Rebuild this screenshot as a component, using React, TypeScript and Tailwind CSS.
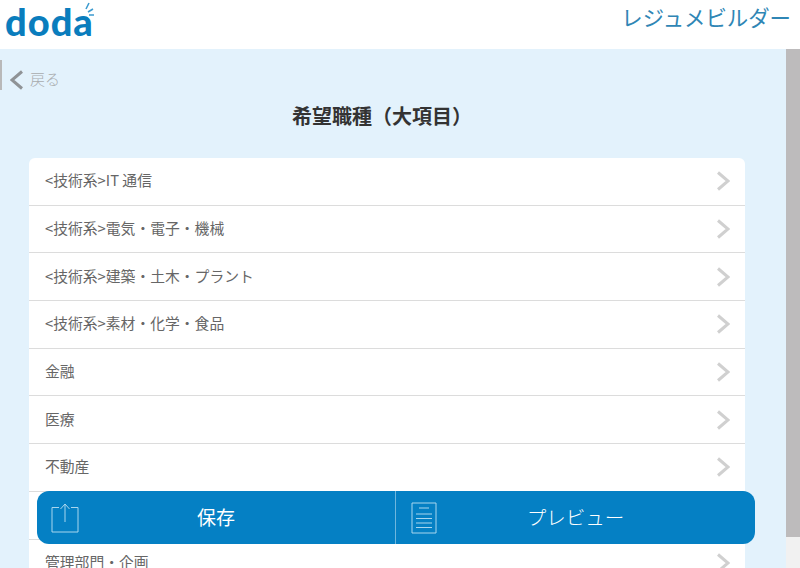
import React from 'react';

const rows = [
  '<技術系>IT 通信',
  '<技術系>電気・電子・機械',
  '<技術系>建築・土木・プラント',
  '<技術系>素材・化学・食品',
  '金融',
  '医療',
  '不動産',
  '',
  '管理部門・企画',
];

const Chevron: React.FC<{ className?: string }> = ({ className }) => (
  <svg viewBox="0 0 14 20" className={className} fill="none" stroke="currentColor" strokeWidth="3">
    <path d="M2 1.5 L12 10 L2 18.5" />
  </svg>
);

const App: React.FC = () => {
  return (
    <div className="relative h-[568px] w-[800px] overflow-hidden bg-[#e3f2fc] font-['Noto_Sans_CJK_JP','Noto_Sans',sans-serif]">
      <header className="flex h-[49px] items-start justify-between bg-white pl-[5px] pr-[9px]">
        <div className="flex items-start">
          <span className="font-['Lato',sans-serif] text-[38px] leading-[42px] font-black tracking-[1px] text-[#0a7dbd]">
            doda
          </span>
          <svg viewBox="0 0 10 16" className="mt-[2px] -ml-[9px] h-[16px] w-[10px] text-[#3d9bcf]" fill="none" stroke="currentColor" strokeWidth="1.6">
            <path d="M1 7 L4 1 M3 10 L8 7 M4 13 L9 13" />
          </svg>
        </div>
        <span className="mt-[2px] text-[21.4px] leading-[30px] text-[#2f86b5]">レジュメビルダー</span>
      </header>

      <div className="flex">
        <main className="w-[786px]">
          <div className="flex h-[41px] items-center pt-[20px]">
            <div className="-mt-[10px] h-[30px] w-[2px] bg-[#b9b9b9]" />
            <Chevron className="ml-[8px] h-[20px] w-[14px] rotate-180 text-[#8f9396]" />
            <span className="mb-[2px] ml-[6px] text-[15px] leading-none font-light text-[#a8abad]">戻る</span>
          </div>
          <h1 className="mt-[11px] pr-[22px] text-center text-[20px] leading-[30px] font-bold text-[#333]">
            希望職種（大項目）
          </h1>
          <ul className="mt-[27px] ml-[29px] w-[716px] rounded-[6px] bg-white">
            {rows.map((label, idx) => (
              <li
                key={idx}
                className="flex h-[47.7px] items-center justify-between border-b border-[#dcdcdc] pr-[15px] pl-[16px] text-[14.8px] text-[#666]"
              >
                <span className="mb-[2px]">{label}</span>
                <Chevron className="h-[20px] w-[14px] text-[#d0d0d0]" />
              </li>
            ))}
          </ul>
        </main>
        <div className="flex h-[519px] w-[14px] flex-col bg-[#f1f1f1]">
          <div className="h-[488px] bg-[#bdbbbc]" />
        </div>
      </div>

      <div className="absolute top-[491px] left-[37px] flex h-[53px] w-[718px] rounded-[12px] bg-[#0580c4] text-white">
        <button className="flex w-[359px] items-center border-r border-[#6fb6dd] pl-[14px]">
          <svg viewBox="0 0 28 30" className="h-[30px] w-[28px]" fill="none" stroke="#a9d6ee" strokeWidth="1">
            <path d="M8 4.5 H1 V29 H27 V4.5 H20" />
            <path d="M14 19 V1 M9.5 6 L14 1 L18.5 6" />
          </svg>
          <span className="mb-[1px] flex-1 text-center text-[19px]">保存</span>
          <span className="w-[42px]" />
        </button>
        <button className="flex flex-1 items-center pl-[15px]">
          <svg viewBox="0 0 26 32" className="h-[32px] w-[26px]" fill="none" stroke="#a9d6ee" strokeWidth="1">
            <path d="M1 1 H25 V31 H1 Z" />
            <path d="M8 6 H18 M5 12 H21 M5 16.5 H21 M5 21 H21 M5 25.5 H21" />
          </svg>
          <span className="mb-[1px] flex-1 text-center text-[19.5px] font-light">プレビュー</span>
          <span className="w-[41px]" />
        </button>
      </div>
    </div>
  );
};

export default App;
